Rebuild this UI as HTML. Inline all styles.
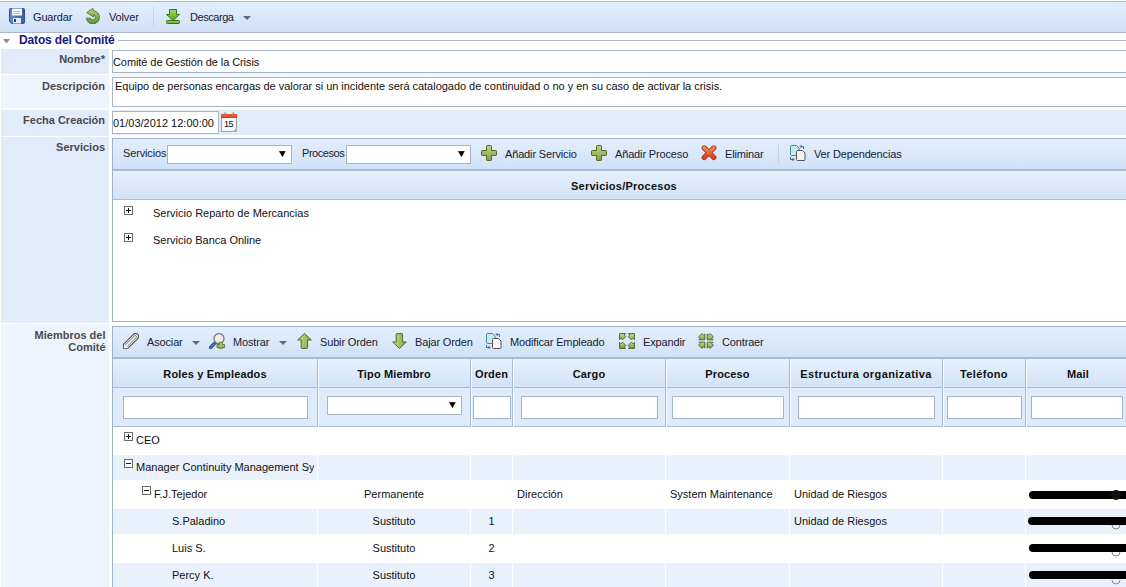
<!DOCTYPE html>
<html><head><meta charset="utf-8">
<style>
*{box-sizing:border-box;margin:0;padding:0}
html,body{width:1126px;height:587px;overflow:hidden;background:#fff;font-family:"Liberation Sans",sans-serif;font-size:11px;color:#000;position:relative}
div,svg{position:absolute}
.t{white-space:nowrap;line-height:normal;font-size:11px}
.bt{color:#1a2230;letter-spacing:-0.15px}
.tb{left:0;top:1px;width:1126px;height:32px;border-top:1px solid #a9b9cc;border-bottom:1px solid #a9b9cc;background:linear-gradient(#e2eefc,#cfe1f8)}
.ptb{background:linear-gradient(#e2eefc,#d0e2f8)}
.sep{width:1px;background:#c4d2e2}
.lbl{left:1px;width:108px;background:#e1ebfa}
.lt{font-weight:bold;color:#4a4a52;text-align:right;right:1021px}
.inp{background:#fff;border:1px solid #a7b6c6}
.hd{background:linear-gradient(#e6f0fc,#d2e3f8)}
.vs{width:1px;background:#a9bdd4}
.vh{width:1px;background:#f3f8fe}
.hb{font-weight:bold;color:#111;text-align:center;letter-spacing:0.15px}
.row{left:113px;width:1020px;background:#e9f1fd}
.cs{width:1px;background:#fff}
.box{width:9px;height:9px;border:1px solid #6b6b6b;background:#fff}
.box::before{content:"";position:absolute;left:1px;top:3px;width:5px;height:1px;background:#111}
.plus::after{content:"";position:absolute;left:3px;top:1px;width:1px;height:5px;background:#111}
.red{height:8px;background:#000;border-radius:4px}
</style></head><body>
<!-- main toolbar -->
<div class="tb"></div>
<svg style="left:9px;top:8px" width="16" height="16" viewBox="0 0 16 16">
 <defs><linearGradient id="gfl" x1="0" x2="1" y1="0" y2="0"><stop offset="0" stop-color="#5a8fd6"/><stop offset="1" stop-color="#2f5fa8"/></linearGradient></defs>
 <path d="M0.5 1.5a1 1 0 0 1 1-1h13a1 1 0 0 1 1 1v13a1 1 0 0 1-1 1H2.5l-2-2z" fill="url(#gfl)" stroke="#2c5393"/>
 <rect x="3" y="0.5" width="10" height="7" fill="#f7f9fc"/>
 <rect x="4.5" y="3" width="7" height="1" fill="#aeb9c8"/><rect x="4.5" y="5" width="7" height="1" fill="#aeb9c8"/>
 <rect x="4" y="10" width="8" height="5.5" fill="#e9edf3"/><rect x="5" y="11" width="2" height="3" fill="#1f3f80"/><rect x="8" y="11" width="2" height="3" fill="#eee4d4"/>
</svg>
<div class="t bt" style="left:33px;top:11px">Guardar</div>
<svg style="left:85px;top:8px" width="16" height="16" viewBox="0 0 16 16">
 <defs><linearGradient id="gvo" x1="0" x2="0" y1="0" y2="1"><stop offset="0" stop-color="#b6d67a"/><stop offset="1" stop-color="#5e9230"/></linearGradient></defs>
 <path d="M1.3 10.2 A6.6 6.6 0 1 0 8.6 2.8 L7.8 0.4 L1.8 4.6 L8.6 9 L8.6 6.6 A2.6 2.6 0 1 1 5.5 10.2 Z" fill="url(#gvo)" stroke="#46751e" stroke-width="0.9" stroke-linejoin="round"/>
</svg>
<div class="t bt" style="left:109px;top:11px">Volver</div>
<div class="sep" style="left:153px;top:7px;height:19px"></div>
<svg style="left:165px;top:8px" width="16" height="16" viewBox="0 0 16 16">
 <defs><linearGradient id="gds" x1="0" x2="0" y1="0" y2="1"><stop offset="0" stop-color="#a6dc6a"/><stop offset="1" stop-color="#4ea21c"/></linearGradient></defs>
 <path d="M4.5 1.5h7v5h3l-6.5 6-6.5-6h3z" fill="url(#gds)" stroke="#3a7418" stroke-linejoin="round"/>
 <rect x="1.5" y="12.5" width="13" height="3" rx="0.8" fill="url(#gds)" stroke="#3a7418"/>
</svg>
<div class="t bt" style="left:190px;top:11px;letter-spacing:-0.45px">Descarga</div>
<svg style="left:243px;top:16px" width="8" height="4" viewBox="0 0 8 4"><path d="M0 0h8L4 4z" fill="#5b6b80"/></svg>

<!-- legend -->
<svg style="left:3px;top:39px" width="7" height="5" viewBox="0 0 7 5"><path d="M0 0h7L3.5 4.6z" fill="#8a8a8a"/></svg>
<div style="left:118px;top:40px;width:1010px;height:1px;background:#a9b6c4"></div>
<div class="t" style="left:19px;top:33px;font-weight:bold;font-size:12px;letter-spacing:-0.15px;color:#17177e;background:#fff;padding-right:3px">Datos del Comité</div>

<!-- form rows -->
<div class="lbl" style="top:49px;height:25px"></div>
<div class="t lt" style="top:53px">Nombre*</div>
<div class="inp" style="left:112px;top:50px;height:23px;width:1030px"></div>
<div class="t" style="left:113px;top:56px;color:#111;letter-spacing:-0.08px">Comité de Gestión de la Crisis</div>

<div style="left:112px;top:73px;width:1020px;height:4px;background:#f1f6fd"></div>
<div class="lbl" style="top:75px;height:33px;background:#eef4fd"></div>
<div class="t lt" style="top:80px">Descripción</div>
<div class="inp" style="left:112px;top:77px;height:30px;width:1030px"></div>
<div class="t" style="left:115px;top:80px;color:#111;letter-spacing:-0.025px">Equipo de personas encargas de valorar si un incidente será catalogado de continuidad o no y en su caso de activar la crisis.</div>

<div class="lbl" style="top:110px;height:26px"></div>
<div style="left:112px;top:110px;width:1020px;height:25px;background:#e1ecfb"></div>
<div class="t lt" style="top:114px">Fecha Creación</div>
<div class="inp" style="left:112px;top:111px;height:23px;width:107px"></div>
<div class="t" style="left:113px;top:117px;color:#111">01/03/2012 12:00:00</div>
<svg style="left:221px;top:112px" width="17" height="20" viewBox="0 0 17 20">
 <rect x="0.5" y="4.5" width="15" height="15" fill="#f7f7f7" stroke="#a0a0a0"/>
 <rect x="0" y="2" width="16" height="4" fill="#e9542c"/>
 <rect x="0" y="5" width="16" height="1" fill="#c8401c"/>
 <rect x="3.5" y="0.5" width="1.5" height="4" fill="#8a8a8a"/><rect x="11.5" y="0.5" width="1.5" height="4" fill="#8a8a8a"/>
 <text x="7.6" y="15.2" font-size="9" text-anchor="middle" font-family="Liberation Sans" fill="#111" letter-spacing="-0.3">15</text>
 <path d="M11.5 19.5 L15.5 15.5 L15.5 19.5Z" fill="#bdbdbd"/>
</svg>

<div class="lbl" style="top:137px;height:186px"></div>
<div class="t lt" style="top:141px">Servicios</div>

<!-- servicios panel -->
<div style="left:112px;top:138px;width:1030px;height:184px;border:1px solid #9fb2c8;background:#fff"></div>
<div class="ptb" style="left:113px;top:139px;width:1020px;height:32px;border-bottom:2px solid #a6bad2"></div>
<div class="t bt" style="left:123px;top:147px">Servicios</div>
<div class="inp" style="left:167px;top:145px;width:125px;height:19px"></div>
<svg style="left:279px;top:151px" width="7" height="6" viewBox="0 0 7 6"><path d="M0.3 0.3h6L3.5 5.7z" fill="#000" stroke="#000" stroke-width="0.5" stroke-linejoin="round"/></svg>
<div class="t bt" style="left:302px;top:147px;letter-spacing:-0.45px">Procesos</div>
<div class="inp" style="left:346px;top:145px;width:125px;height:19px"></div>
<svg style="left:458px;top:151px" width="7" height="6" viewBox="0 0 7 6"><path d="M0.3 0.3h6L3.5 5.7z" fill="#000" stroke="#000" stroke-width="0.5" stroke-linejoin="round"/></svg>
<svg style="left:0;top:0" width="0" height="0"><defs>
<linearGradient id="gpl" x1="0" x2="0" y1="0" y2="1"><stop offset="0" stop-color="#bcd68a"/><stop offset="1" stop-color="#7fa040"/></linearGradient>
<linearGradient id="gar" x1="0" x2="1" y1="0" y2="0"><stop offset="0" stop-color="#c4e08e"/><stop offset="1" stop-color="#7ca442"/></linearGradient>
<linearGradient id="gex" x1="0" x2="0" y1="0" y2="1"><stop offset="0" stop-color="#cfe6a0"/><stop offset="1" stop-color="#6e9a38"/></linearGradient>
<linearGradient id="gex2" gradientUnits="userSpaceOnUse" x1="0" x2="0" y1="0" y2="8" spreadMethod="repeat"><stop offset="0" stop-color="#d2e8a4"/><stop offset="1" stop-color="#6a9634"/></linearGradient>
<linearGradient id="gxx" x1="0" x2="0" y1="0" y2="1"><stop offset="0" stop-color="#f58a5a"/><stop offset="1" stop-color="#d8441c"/></linearGradient>
</defs></svg>
<svg style="left:481px;top:145px" width="16" height="16" viewBox="0 0 16 16">
 <path d="M5.5 1.2a0.7 0.7 0 0 1 0.7-0.7h3.6a0.7 0.7 0 0 1 0.7 0.7v4.3h4.3a0.7 0.7 0 0 1 0.7 0.7v3.6a0.7 0.7 0 0 1-0.7 0.7h-4.3v4.3a0.7 0.7 0 0 1-0.7 0.7h-3.6a0.7 0.7 0 0 1-0.7-0.7v-4.3h-4.3a0.7 0.7 0 0 1-0.7-0.7v-3.6a0.7 0.7 0 0 1 0.7-0.7h4.3z" fill="url(#gpl)" stroke="#4c6c1c"/>
</svg>
<div class="t bt" style="left:505px;top:148px">Añadir Servicio</div>
<svg style="left:591px;top:145px" width="16" height="16" viewBox="0 0 16 16">
 <path d="M5.5 1.2a0.7 0.7 0 0 1 0.7-0.7h3.6a0.7 0.7 0 0 1 0.7 0.7v4.3h4.3a0.7 0.7 0 0 1 0.7 0.7v3.6a0.7 0.7 0 0 1-0.7 0.7h-4.3v4.3a0.7 0.7 0 0 1-0.7 0.7h-3.6a0.7 0.7 0 0 1-0.7-0.7v-4.3h-4.3a0.7 0.7 0 0 1-0.7-0.7v-3.6a0.7 0.7 0 0 1 0.7-0.7h4.3z" fill="url(#gpl)" stroke="#4c6c1c"/>
</svg>
<div class="t bt" style="left:615px;top:148px">Añadir Proceso</div>
<svg style="left:701px;top:145px" width="16" height="16" viewBox="0 0 16 16">
 <path d="M3.2 2.9 L12.8 12.5 M12.8 2.9 L3.2 12.5" stroke="#a5381a" stroke-width="5.2" stroke-linecap="round"/>
 <path d="M3.2 2.9 L12.8 12.5 M12.8 2.9 L3.2 12.5" stroke="url(#gxx)" stroke-width="3.4" stroke-linecap="round"/>
</svg>
<div class="t bt" style="left:725px;top:148px">Eliminar</div>
<div class="sep" style="left:778px;top:144px;height:20px"></div>
<svg style="left:789px;top:145px" width="17" height="17" viewBox="0 0 17 17">
 <path d="M1.5 1.5a1 1 0 0 1 1-1h5l2.5 2.5v6.5a1 1 0 0 1-1 1h-6.5a1 1 0 0 1-1-1z" fill="#c6ecef" stroke="#3f8c92"/>
 <path d="M7.5 6.5a1 1 0 0 1 1-1h5l2.5 2.5v6.5a1 1 0 0 1-1 1h-6.5a1 1 0 0 1-1-1z" fill="#f6f3f3" stroke="#555"/>
 <path d="M11.5 1.5h3v2.5 M12.5 0 L11 1.5 L12.5 3" fill="none" stroke="#4a66a8" stroke-width="1"/>
 <path d="M1.5 12v2.5h3.5 M3.5 13 L5 14.5 L3.5 16" fill="none" stroke="#4a66a8" stroke-width="1"/>
</svg>
<div class="t bt" style="left:814px;top:148px">Ver Dependencias</div>
<div class="hd" style="left:113px;top:171px;width:1020px;height:29px;border-bottom:1px solid #a9bcd2"></div>
<div class="t hb" style="left:113px;width:1022px;top:180px;letter-spacing:0.25px">Servicios/Procesos</div>
<div class="box plus" style="left:124px;top:206px"></div>
<div class="t" style="left:153px;top:207px;color:#111">Servicio Reparto de Mercancias</div>
<div class="box plus" style="left:124px;top:233px"></div>
<div class="t" style="left:153px;top:234px;color:#111">Servicio Banca Online</div>

<!-- miembros -->
<div class="lbl" style="top:324px;height:263px;background:#eef4fd"></div>
<div class="t lt" style="top:329px;line-height:12px;right:1020.5px">Miembros del<br>Comité</div>

<div style="left:112px;top:326px;width:1030px;height:270px;border:1px solid #9fb2c8;background:#fff"></div>
<div class="ptb" style="left:113px;top:327px;width:1020px;height:32px;border-bottom:2px solid #a6bad2"></div>
<svg style="left:123px;top:333px" width="16" height="16" viewBox="0 0 16 16">
 <g transform="rotate(45 8 8)">
 <path d="M5 17.5 V1.5 a3 3 0 0 1 6 0 V15.5 L8 19 L5 15.5" fill="#f4f4f4" stroke="#4e4e4e" stroke-width="1.1" stroke-linejoin="round"/>
 <path d="M6.8 15 V2 a1.2 1.2 0 0 1 2.4 0 V14.5" fill="none" stroke="#6a6a6a" stroke-width="0.9"/>
 </g>
</svg>
<div class="t bt" style="left:147px;top:336px">Asociar</div>
<svg style="left:192px;top:341px" width="8" height="4" viewBox="0 0 8 4"><path d="M0 0h8L4 4z" fill="#5b6b80"/></svg>
<svg style="left:209px;top:333px" width="16" height="16" viewBox="0 0 16 16">
 <path d="M6.5 9.5 L1.5 14.5" stroke="#2f57a6" stroke-width="3.4" stroke-linecap="round"/>
 <path d="M6.5 9.5 L1.5 14.5" stroke="#7fa6e6" stroke-width="1" stroke-dasharray="1 1"/>
 <circle cx="10" cy="5.6" r="5" fill="#ecece8" stroke="#7a7a7a" stroke-width="1.3"/>
 <path d="M10.3 9.2h3v2.3h2.3v3h-2.3v2.3h-3v-2.3H8v-3h2.3z" fill="url(#gpl)" stroke="#4c6c1c" stroke-width="0.8"/>
</svg>
<div class="t bt" style="left:233px;top:336px">Mostrar</div>
<svg style="left:279px;top:341px" width="8" height="4" viewBox="0 0 8 4"><path d="M0 0h8L4 4z" fill="#5b6b80"/></svg>
<svg style="left:297px;top:333px" width="16" height="16" viewBox="0 0 16 16">
 <path d="M7.5 0.5 L14.3 7 H10.6 V14.6 a0.8 0.8 0 0 1-0.8 0.8 H5 a0.8 0.8 0 0 1-0.8-0.8 V7 H0.7 Z" fill="url(#gar)" stroke="#4c6c1c" stroke-linejoin="round"/>
</svg>
<div class="t bt" style="left:320px;top:336px">Subir Orden</div>
<svg style="left:392px;top:333px" width="16" height="16" viewBox="0 0 16 16">
 <path d="M7.5 15.5 L14.3 9 H10.6 V1.4 a0.8 0.8 0 0 0-0.8-0.8 H5 a0.8 0.8 0 0 0-0.8 0.8 V9 H0.7 Z" fill="url(#gar)" stroke="#4c6c1c" stroke-linejoin="round"/>
</svg>
<div class="t bt" style="left:415px;top:336px">Bajar Orden</div>
<svg style="left:485px;top:333px" width="17" height="17" viewBox="0 0 17 17">
 <path d="M1.5 1.5a1 1 0 0 1 1-1h5l2.5 2.5v6.5a1 1 0 0 1-1 1h-6.5a1 1 0 0 1-1-1z" fill="#c6ecef" stroke="#3f8c92"/>
 <path d="M7.5 6.5a1 1 0 0 1 1-1h5l2.5 2.5v6.5a1 1 0 0 1-1 1h-6.5a1 1 0 0 1-1-1z" fill="#f6f3f3" stroke="#555"/>
 <path d="M11.5 1.5h3v2.5 M12.5 0 L11 1.5 L12.5 3" fill="none" stroke="#4a66a8" stroke-width="1"/>
 <path d="M1.5 12v2.5h3.5 M3.5 13 L5 14.5 L3.5 16" fill="none" stroke="#4a66a8" stroke-width="1"/>
</svg>
<div class="t bt" style="left:510px;top:336px">Modificar Empleado</div>
<svg style="left:619px;top:333px" width="16" height="16" viewBox="0 0 16 16">
 <g fill="url(#gex2)" stroke="#3e5e1c" stroke-width="0.9" stroke-linejoin="round"><path d="M0.6 0.6 H6.6 L5.2 2.0 L6.8 3.6 L3.6 6.8 L2.0 5.2 L0.6 6.6 Z"/><path d="M15.4 0.6 H9.4 L10.8 2.0 L9.2 3.6 L12.4 6.8 L14.0 5.2 L15.4 6.6 Z"/><path d="M0.6 15.4 H6.6 L5.2 14.0 L6.8 12.4 L3.6 9.2 L2.0 10.8 L0.6 9.4 Z"/><path d="M15.4 15.4 H9.4 L10.8 14.0 L9.2 12.4 L12.4 9.2 L14.0 10.8 L15.4 9.4 Z"/></g>
</svg>
<div class="t bt" style="left:643px;top:336px">Expandir</div>
<svg style="left:698px;top:333px" width="16" height="16" viewBox="0 0 16 16">
 <g fill="url(#gex2)" stroke="#3e5e1c" stroke-width="0.9" stroke-linejoin="round"><path d="M6.8 6.8 H0.9 L2.2 5.5 L0.6 3.9 L3.9 0.6 L5.5 2.2 L6.8 0.9 Z"/><path d="M9.2 6.8 H15.1 L13.8 5.5 L15.4 3.9 L12.1 0.6 L10.5 2.2 L9.2 0.9 Z"/><path d="M6.8 9.2 H0.9 L2.2 10.5 L0.6 12.1 L3.9 15.4 L5.5 13.8 L6.8 15.1 Z"/><path d="M9.2 9.2 H15.1 L13.8 10.5 L15.4 12.1 L12.1 15.4 L10.5 13.8 L9.2 15.1 Z"/></g>
</svg>
<div class="t bt" style="left:722px;top:336px">Contraer</div>

<!-- grid header -->
<div class="hd" style="left:113px;top:359px;width:1020px;height:29px;border-bottom:1px solid #a9bcd2"></div>
<div style="left:113px;top:388px;width:1020px;height:39px;background:#dfeafa;border-bottom:1px solid #a9bcd2"></div>
<div class="vs" style="left:317px;top:359px;height:68px"></div><div class="vh" style="left:318px;top:359px;height:68px"></div>
<div class="vs" style="left:470px;top:359px;height:68px"></div><div class="vh" style="left:471px;top:359px;height:68px"></div>
<div class="vs" style="left:512px;top:359px;height:68px"></div><div class="vh" style="left:513px;top:359px;height:68px"></div>
<div class="vs" style="left:665px;top:359px;height:68px"></div><div class="vh" style="left:666px;top:359px;height:68px"></div>
<div class="vs" style="left:789px;top:359px;height:68px"></div><div class="vh" style="left:790px;top:359px;height:68px"></div>
<div class="vs" style="left:942px;top:359px;height:68px"></div><div class="vh" style="left:943px;top:359px;height:68px"></div>
<div class="vs" style="left:1025px;top:359px;height:68px"></div><div class="vh" style="left:1026px;top:359px;height:68px"></div>

<div class="t hb" style="left:113px;width:204px;top:368px">Roles y Empleados</div>
<div class="t hb" style="left:318px;width:152px;top:368px">Tipo Miembro</div>
<div class="t hb" style="left:471px;width:41px;top:368px">Orden</div>
<div class="t hb" style="left:513px;width:152px;top:368px">Cargo</div>
<div class="t hb" style="left:666px;width:123px;top:368px">Proceso</div>
<div class="t hb" style="left:790px;width:152px;top:368px;letter-spacing:0.4px">Estructura organizativa</div>
<div class="t hb" style="left:943px;width:82px;top:368px;letter-spacing:0.35px">Teléfono</div>
<div class="t hb" style="left:1026px;width:104px;top:368px">Mail</div>

<div class="inp" style="left:123px;top:396px;width:185px;height:23px"></div>
<div class="inp" style="left:327px;top:396px;width:135px;height:19px"></div>
<svg style="left:449px;top:402px" width="7" height="6" viewBox="0 0 7 6"><path d="M0.3 0.3h6L3.5 5.7z" fill="#000" stroke="#000" stroke-width="0.5" stroke-linejoin="round"/></svg>
<div class="inp" style="left:473px;top:396px;width:38px;height:23px"></div>
<div class="inp" style="left:521px;top:396px;width:137px;height:23px"></div>
<div class="inp" style="left:672px;top:396px;width:112px;height:23px"></div>
<div class="inp" style="left:798px;top:396px;width:137px;height:23px"></div>
<div class="inp" style="left:947px;top:396px;width:75px;height:23px"></div>
<div class="inp" style="left:1031px;top:396px;width:92px;height:23px"></div>

<!-- rows -->
<div class="row" style="top:455px;height:25px"></div>
<div class="row" style="top:509px;height:25px"></div>
<div class="row" style="top:563px;height:25px"></div>
<div class="cs" style="left:317px;top:427px;height:160px"></div>
<div class="cs" style="left:470px;top:427px;height:160px"></div>
<div class="cs" style="left:512px;top:427px;height:160px"></div>
<div class="cs" style="left:665px;top:427px;height:160px"></div>
<div class="cs" style="left:789px;top:427px;height:160px"></div>
<div class="cs" style="left:942px;top:427px;height:160px"></div>
<div class="cs" style="left:1025px;top:427px;height:160px"></div>

<div class="box plus" style="left:124px;top:432px"></div>
<div class="t" style="left:136px;top:434px;color:#111">CEO</div>
<div class="box" style="left:124px;top:459px"></div>
<div style="left:136px;top:461px;width:178px;overflow:hidden;height:14px"><div class="t" style="left:0;top:0;color:#111">Manager Continuity Management Sy</div></div>
<div class="box" style="left:142px;top:486px"></div>
<div class="t" style="left:154px;top:488px;color:#111">F.J.Tejedor</div>
<div class="t" style="left:172px;top:515px;color:#111">S.Paladino</div>
<div class="t" style="left:172px;top:542px;color:#111">Luis S.</div>
<div class="t" style="left:172px;top:569px;color:#111">Percy K.</div>

<div class="t" style="left:318px;width:152px;text-align:center;top:488px;color:#111">Permanente</div>
<div class="t" style="left:318px;width:152px;text-align:center;top:515px;color:#111">Sustituto</div>
<div class="t" style="left:318px;width:152px;text-align:center;top:542px;color:#111">Sustituto</div>
<div class="t" style="left:318px;width:152px;text-align:center;top:569px;color:#111">Sustituto</div>
<div class="t" style="left:471px;width:41px;text-align:center;top:515px;color:#111">1</div>
<div class="t" style="left:471px;width:41px;text-align:center;top:542px;color:#111">2</div>
<div class="t" style="left:471px;width:41px;text-align:center;top:569px;color:#111">3</div>
<div class="t" style="left:517px;top:488px;color:#111">Dirección</div>
<div class="t" style="left:670px;top:488px;color:#111">System Maintenance</div>
<div class="t" style="left:794px;top:488px;color:#111">Unidad de Riesgos</div>
<div class="t" style="left:794px;top:515px;color:#111">Unidad de Riesgos</div>

<div class="red" style="left:1029px;top:491px;width:110px"></div>
<div class="red" style="left:1028px;top:517px;width:110px"></div>
<div class="red" style="left:1029px;top:544px;width:110px"></div>
<div class="red" style="left:1029px;top:571px;width:110px"></div>
<svg style="left:1106px;top:486px" width="20" height="100" viewBox="0 0 20 100">
<circle cx="10" cy="9" r="5" fill="#111"/>
<path d="M6 39 A4 4 0 0 0 14 39" fill="none" stroke="#888" stroke-width="1"/>
<path d="M6 66 A4 4 0 0 0 14 66" fill="none" stroke="#888" stroke-width="1"/>
<path d="M6 94 A4 4 0 0 0 14 94" fill="none" stroke="#888" stroke-width="1"/>
</svg>
</body></html>
